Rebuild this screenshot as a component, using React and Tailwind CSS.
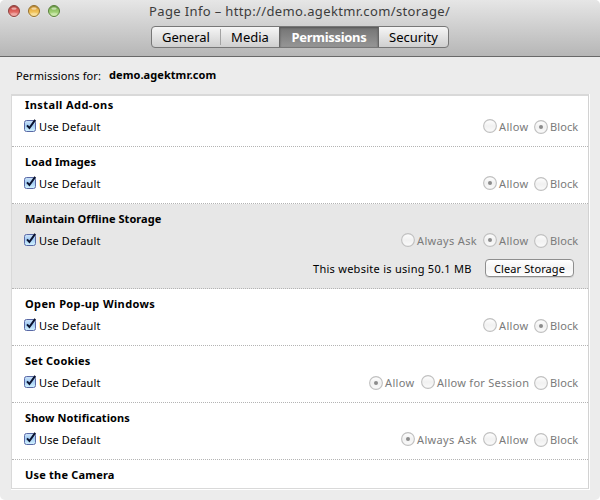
const LABELS = {
  Allow: { m: "", w: "w-[30px]", t: "tracking-[0.35px]" },
  Block: { m: "", w: "w-[29px]", t: "tracking-[0.1px]" },
  "Always Ask": { m: "", w: "w-[61px]", t: "tracking-[0.35px]" },
  "Allow for Session": { m: "ml-px", w: "w-[92px]", t: "tracking-[0.28px]" },
};

const ROWS = [
  { title: "Install Add-ons", track: "tracking-[0.42px]", options: [["Allow"], ["Block", true, true]] },
  { title: "Load Images", track: "tracking-[0.1px]", options: [["Allow", true], ["Block", false, true]] },
  {
    title: "Maintain Offline Storage",
    track: "tracking-[0.06px]",
    usage: "This website is using 50.1 MB",
    options: [["Always Ask"], ["Allow", true], ["Block", false, true]],
  },
  { title: "Open Pop-up Windows", track: "tracking-[0.38px]", options: [["Allow"], ["Block", true, true]] },
  { title: "Set Cookies", track: "tracking-[0.2px]", options: [["Allow", true, true], ["Allow for Session"], ["Block", false, true]] },
  { title: "Show Notifications", track: "tracking-[0.08px]", options: [["Always Ask", true], ["Allow"], ["Block", false, true]] },
  { title: "Use the Camera", track: "tracking-[0.2px]" },
];

function Light({ id, edge, dark, mid, light }) {
  return (
    <svg width="12" height="13" viewBox="0 0 12 13" className="block">
      <defs>
        <linearGradient id={id} x1="0" y1="0" x2="0" y2="1">
          <stop offset="0" stopColor={dark} />
          <stop offset="0.5" stopColor={mid} />
          <stop offset="1" stopColor={light} />
        </linearGradient>
      </defs>
      <circle cx="6" cy="6.8" r="6" fill="#fff" opacity="0.45" />
      <circle cx="6" cy="6" r="5.5" fill={`url(#${id})`} stroke={edge} strokeWidth="1" />
      <path d="M1.6 4 A5 5 0 0 1 10.4 4" fill="none" stroke={edge} strokeWidth="1" opacity="0.5" />
      <ellipse cx="6" cy="3.6" rx="2.6" ry="1.2" fill="#fff" opacity="0.5" />
      <ellipse cx="6" cy="9" rx="3" ry="1.5" fill="#fff" opacity="0.25" />
    </svg>
  );
}

function Checkbox() {
  return (
    <svg width="14" height="14" viewBox="0 0 14 14" className="-ml-px mt-px block shrink-0">
      <defs>
        <linearGradient id="box" x1="0" y1="0" x2="0" y2="1">
          <stop offset="0" stopColor="#cfe4f9" />
          <stop offset="0.45" stopColor="#a3ccf3" />
          <stop offset="1" stopColor="#d4f4ff" />
        </linearGradient>
      </defs>
      <rect x="0.5" y="1.5" width="11" height="11" rx="2" fill="url(#box)" stroke="#5a69a6" />
      <path d="M3 6.4 L5.4 9 L11.2 0.8" fill="none" stroke="#0a1330" strokeWidth="2" />
    </svg>
  );
}

function Radio({ label, checked, low }) {
  const { m, w, t } = LABELS[label];
  return (
    <div className={`flex gap-[2px] ${m}`}>
      <svg width="14" height="14" viewBox="0 0 14 14" className={low ? "mt-px block" : "block"}>
        <defs>
          <linearGradient id="dial" x1="0" y1="0" x2="0" y2="1">
            <stop offset="0" stopColor="#fff" stopOpacity="0.9" />
            <stop offset="0.5" stopColor="#f1f1f1" />
            <stop offset="1" stopColor="#fbfbfb" />
          </linearGradient>
        </defs>
        <circle cx="7" cy="7" r="6.4" fill="url(#dial)" stroke="#c0c0c0" strokeWidth="1.1" />
        {checked && <circle cx="7" cy="7" r="2" fill="#8c8c8c" />}
      </svg>
      <span className={`${w} ${t} whitespace-nowrap text-[#7a7a7a]`}>{label}</span>
    </div>
  );
}

function Row({ title, track, options, usage }) {
  return (
    <section
      className={`shrink-0 border-b border-dotted border-[#b4b4b4] pl-[13px] pr-[9px] pt-[7px] ${
        usage ? "h-[85px] bg-[#e7e7e7]" : options ? "h-[57px]" : "h-[28px] border-b-0"
      }`}
    >
      <h2 className={`whitespace-nowrap font-bold ${track}`}>{title}</h2>
      {options && (
        <div className="mt-[6px] flex h-[16px] items-start justify-between">
          <div className="flex gap-px">
            <Checkbox />
            <span className="mt-px tracking-[0.12px]">Use Default</span>
          </div>
          <div className="mt-px flex items-start gap-[5px]">
            {options.map(([label, checked, low]) => (
              <Radio key={label} label={label} checked={checked} low={low} />
            ))}
          </div>
        </div>
      )}
      {usage && (
        <div className="mt-[11px] flex items-center justify-end gap-[13px] pr-[5px]">
          <span className="w-[159px] whitespace-nowrap tracking-[0.27px]">{usage}</span>
          <button className="h-[18px] w-[89px] whitespace-nowrap rounded-[4px] border border-[#8e8e8e] bg-linear-to-b from-white via-[#f4f4f4] to-white text-center leading-[15px] tracking-[0.1px] shadow-[0_1px_0_#d0d0d0]">
            Clear Storage
          </button>
        </div>
      )}
    </section>
  );
}

export default function App() {
  return (
    <div className="h-[500px] w-[600px] bg-white font-['Noto_Sans','Lucida_Grande',sans-serif] text-[11px] leading-[15px] text-black">
      <div className="flex h-[500px] flex-col overflow-hidden rounded-[5px] bg-[#ececec]">
        <header className="h-[57px] shrink-0 border-b border-[#686868] bg-linear-to-b from-[#e6e6e6] to-[#b6b6b6]">
          <div className="flex h-[26px] items-start pl-[8px]">
            <div className="flex gap-[8px] pt-[5px]">
              <Light id="close" edge="#8b4340" dark="#c04a45" mid="#dd5f5a" light="#f3a49e" />
              <Light id="minimize" edge="#94702f" dark="#d59a3c" mid="#eebb50" light="#fae592" />
              <Light id="zoom" edge="#587f3c" dark="#7bab52" mid="#97c96c" light="#cdeea2" />
            </div>
            <h1 className="ml-[89px] mt-[2px] whitespace-nowrap text-[13px] leading-[18px] tracking-[0.37px] text-[#3c3c3c]">
              Page Info – http://demo.agektmr.com/storage/
            </h1>
          </div>
          <nav className="mx-auto flex h-[22px] w-[298px] overflow-hidden rounded-[4px] border border-[#777] bg-linear-to-b from-[#f6f6f6] to-[#cfcfcf] text-center text-[13px] leading-[21px]">
            <div className="w-[68px]">General</div>
            <div className="my-[2px] w-px bg-[#a3a3a3]" />
            <div className="w-[58px]">Media</div>
            <div className="w-[100px] border-x border-[#666] bg-linear-to-b from-[#747474] to-[#969696] font-bold tracking-[-0.3px] text-white shadow-[inset_0_1px_2px_#555]">
              Permissions
            </div>
            <div className="w-[69px]">Security</div>
          </nav>
        </header>
        <div className="flex h-[37px] shrink-0 items-start pl-[16px] pt-[11px]">
          <span className="w-[93px] whitespace-nowrap tracking-[0.1px]">Permissions for:</span>
          <span className="-mt-px whitespace-nowrap font-bold tracking-[0.07px]">demo.agektmr.com</span>
        </div>
        <main className="ml-[11px] mr-[10px] flex h-[396px] shrink-0 flex-col border-b border-r border-white">
          <div className="flex h-[395px] flex-col overflow-hidden border-x border-b border-t-2 border-[#d9d9d9] border-r-[#d2d2d2] bg-white">
            <div className="-mt-[6px] flex flex-col">
              {ROWS.map((row) => (
                <Row key={row.title} {...row} />
              ))}
            </div>
          </div>
        </main>
      </div>
    </div>
  );
}
